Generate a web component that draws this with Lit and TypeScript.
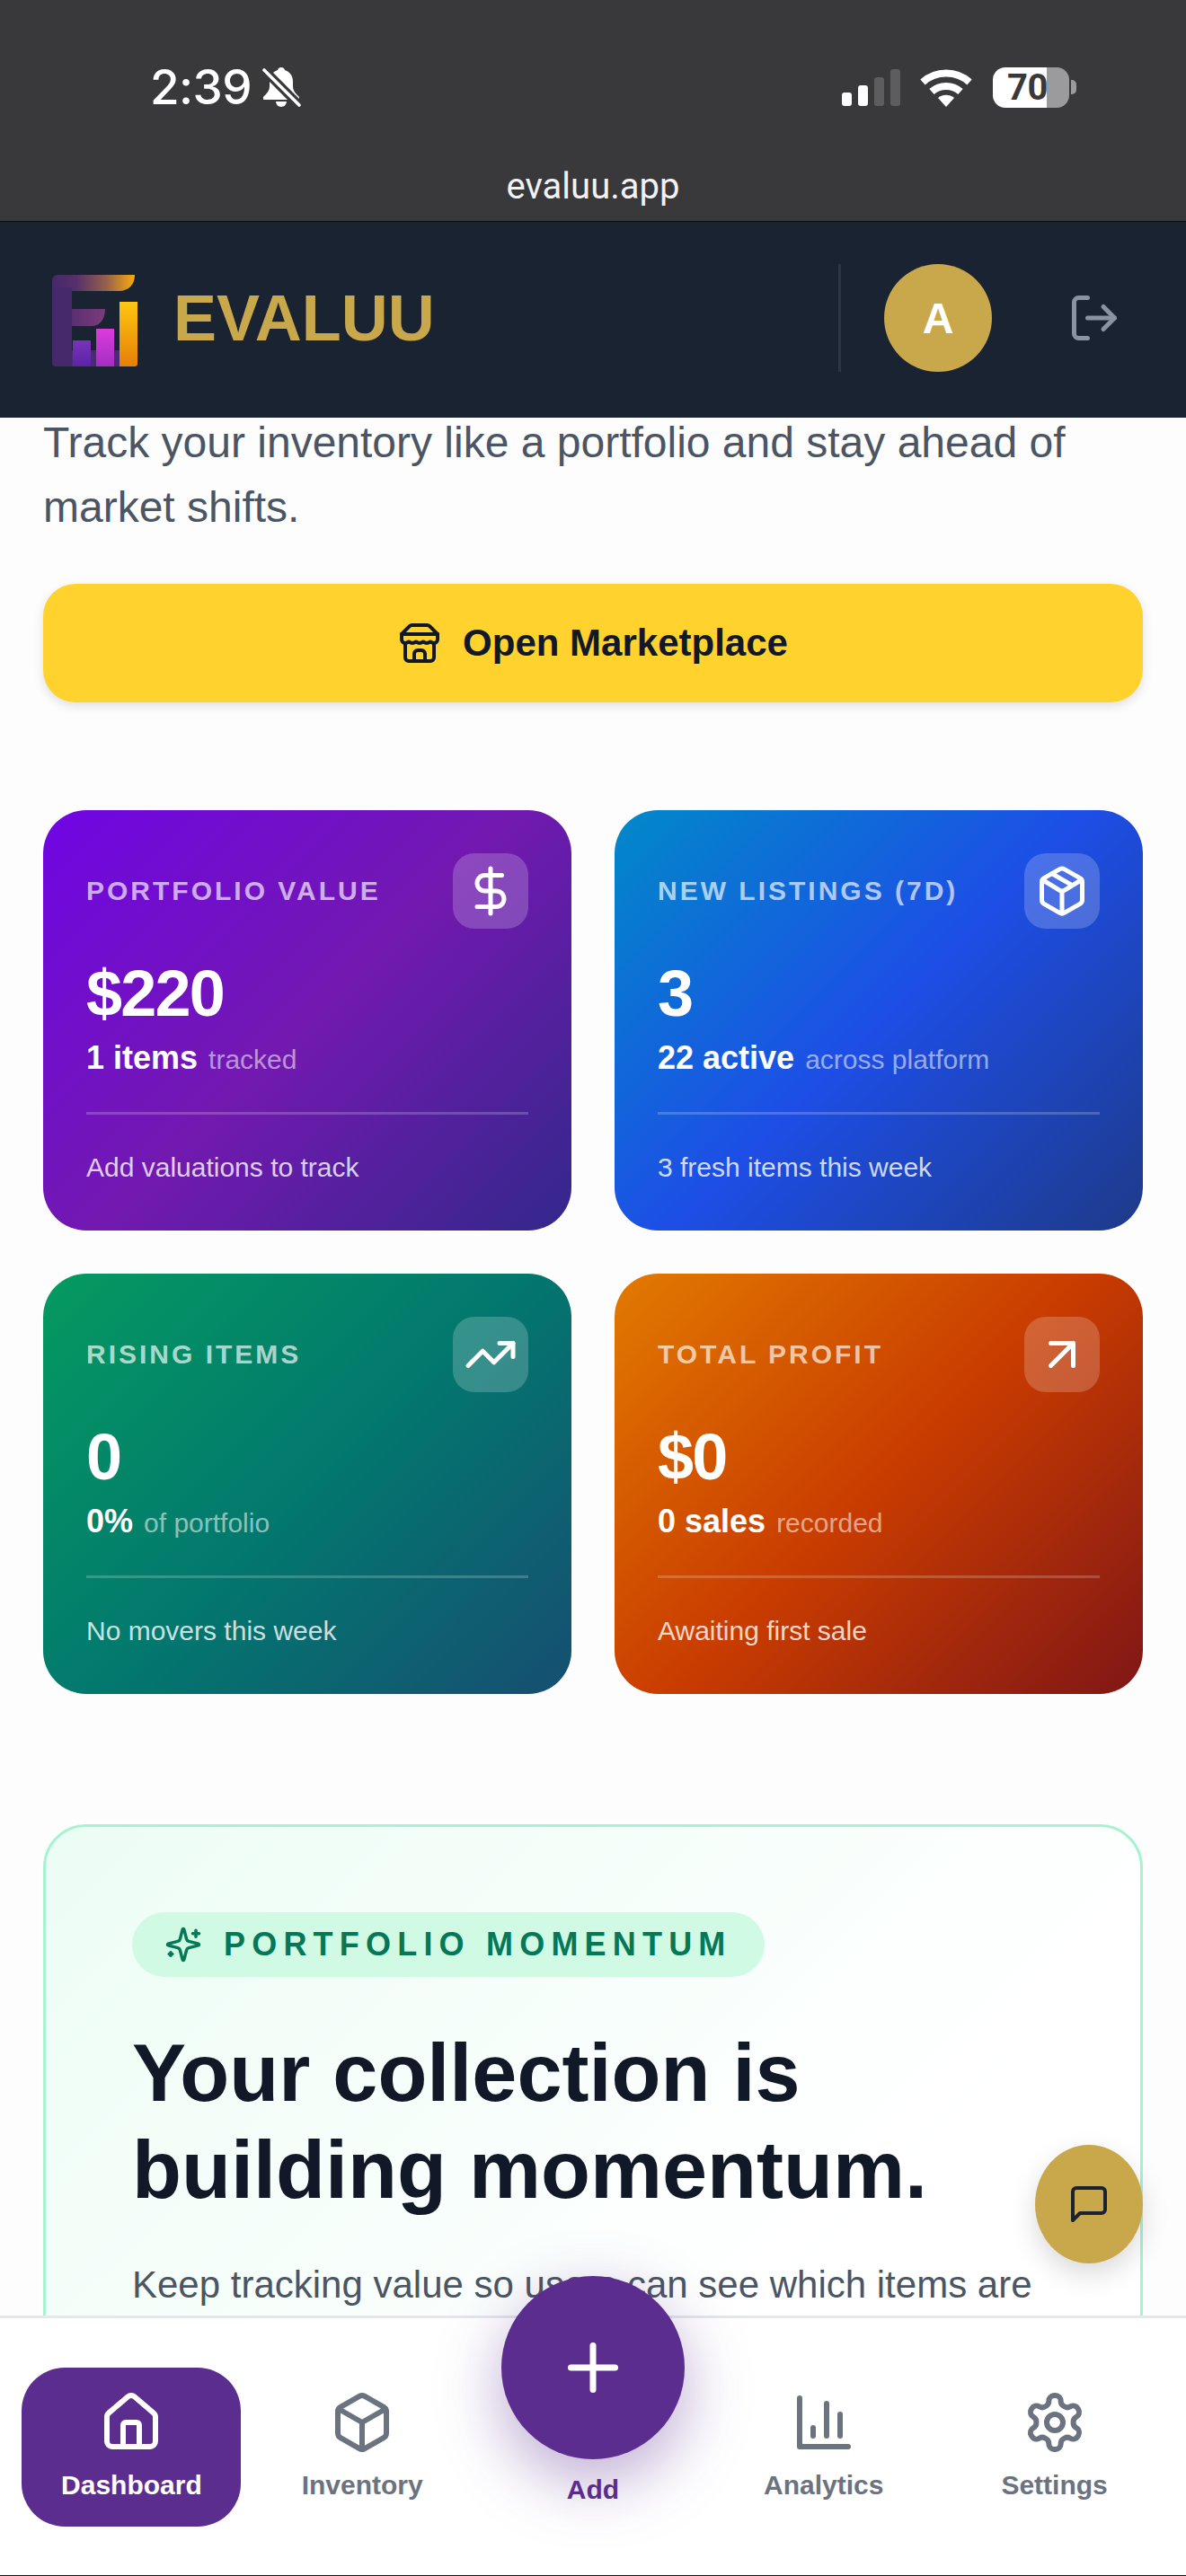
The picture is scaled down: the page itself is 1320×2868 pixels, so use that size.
import { LitElement, html, css, svg } from "lit";
import { customElement } from "lit/decorators.js";

const icon = (size: number, body: unknown, sw = 2) => html`<svg class="ic" width=${size} height=${size} viewBox="0 0 24 24" fill="none" stroke="currentColor" stroke-width=${sw} stroke-linecap="round" stroke-linejoin="round">${body}</svg>`;

const P = {
  logout: svg`<path d="M9 21H5a2 2 0 0 1-2-2V5a2 2 0 0 1 2-2h4"/><polyline points="16 17 21 12 16 7"/><line x1="21" y1="12" x2="9" y2="12"/>`,
  store: svg`<path d="m2 7 4.41-4.41A2 2 0 0 1 7.83 2h8.34a2 2 0 0 1 1.42.59L22 7"/><path d="M4 12v8a2 2 0 0 0 2 2h12a2 2 0 0 0 2-2v-8"/><path d="M15 22v-4a2 2 0 0 0-2-2h-2a2 2 0 0 0-2 2v4"/><path d="M2 7h20"/><path d="M22 7v3a2 2 0 0 1-2 2a2.7 2.7 0 0 1-1.59-.63.7.7 0 0 0-.82 0A2.7 2.7 0 0 1 16 12a2.7 2.7 0 0 1-1.59-.63.7.7 0 0 0-.82 0A2.7 2.7 0 0 1 12 12a2.7 2.7 0 0 1-1.59-.63.7.7 0 0 0-.82 0A2.7 2.7 0 0 1 8 12a2.7 2.7 0 0 1-1.59-.63.7.7 0 0 0-.82 0A2.7 2.7 0 0 1 4 12a2 2 0 0 1-2-2V7"/>`,
  dollar: svg`<line x1="12" y1="2" x2="12" y2="22"/><path d="M17 5H9.5a3.5 3.5 0 0 0 0 7h5a3.5 3.5 0 0 1 0 7H6"/>`,
  pkg: svg`<path d="M11 21.73a2 2 0 0 0 2 0l7-4a2 2 0 0 0 1-1.73V8a2 2 0 0 0-1-1.73l-7-4a2 2 0 0 0-2 0l-7 4A2 2 0 0 0 3 8v8a2 2 0 0 0 1 1.73z"/><path d="M12 22V12"/><path d="m3.3 7 7.703 4.734a2 2 0 0 0 1.994 0L20.7 7"/><path d="m7.5 4.27 9 5.15"/>`,
  trend: svg`<polyline points="22 7 13.5 15.5 8.5 10.5 2 17"/><polyline points="16 7 22 7 22 13"/>`,
  arrow: svg`<path d="M7 7h10v10"/><path d="M7 17 17 7"/>`,
  sparkles: svg`<path d="M9.937 15.5A2 2 0 0 0 8.5 14.063l-6.135-1.582a.5.5 0 0 1 0-.962L8.5 9.936A2 2 0 0 0 9.937 8.5l1.582-6.135a.5.5 0 0 1 .963 0L14.063 8.5A2 2 0 0 0 15.5 9.937l6.135 1.581a.5.5 0 0 1 0 .964L15.5 14.063a2 2 0 0 0-1.437 1.437l-1.582 6.135a.5.5 0 0 1-.963 0z"/><path d="M20 3v4"/><path d="M22 5h-4"/><path d="M4 17v2"/><path d="M5 18H3"/>`,
  house: svg`<path d="M15 21v-8a1 1 0 0 0-1-1h-4a1 1 0 0 0-1 1v8"/><path d="M3 10a2 2 0 0 1 .709-1.528l7-5.999a2 2 0 0 1 2.582 0l7 5.999A2 2 0 0 1 21 10v9a2 2 0 0 1-2 2H5a2 2 0 0 1-2-2z"/>`,
  box: svg`<path d="M21 8a2 2 0 0 0-1-1.73l-7-4a2 2 0 0 0-2 0l-7 4A2 2 0 0 0 3 8v8a2 2 0 0 0 1 1.73l7 4a2 2 0 0 0 2 0l7-4A2 2 0 0 0 21 16Z"/><path d="m3.3 7 8.7 5 8.7-5"/><path d="M12 22V12"/>`,
  chart: svg`<path d="M3 3v18h18"/><path d="M18 17V9"/><path d="M13 17V5"/><path d="M8 17v-3"/>`,
  gear: svg`<path d="M12.22 2h-.44a2 2 0 0 0-2 2v.18a2 2 0 0 1-1 1.73l-.43.25a2 2 0 0 1-2 0l-.15-.08a2 2 0 0 0-2.73.73l-.22.38a2 2 0 0 0 .73 2.73l.15.1a2 2 0 0 1 1 1.72v.51a2 2 0 0 1-1 1.74l-.15.09a2 2 0 0 0-.73 2.73l.22.38a2 2 0 0 0 2.73.73l.15-.08a2 2 0 0 1 2 0l.43.25a2 2 0 0 1 1 1.73V20a2 2 0 0 0 2 2h.44a2 2 0 0 0 2-2v-.18a2 2 0 0 1 1-1.73l.43-.25a2 2 0 0 1 2 0l.15.08a2 2 0 0 0 2.73-.73l.22-.39a2 2 0 0 0-.73-2.73l-.15-.08a2 2 0 0 1-1-1.74v-.5a2 2 0 0 1 1-1.74l.15-.09a2 2 0 0 0 .73-2.73l-.22-.38a2 2 0 0 0-2.73-.73l-.15.08a2 2 0 0 1-2 0l-.43-.25a2 2 0 0 1-1-1.73V4a2 2 0 0 0-2-2z"/><circle cx="12" cy="12" r="3"/>`,
  plus: svg`<path d="M5 12h14"/><path d="M12 5v14"/>`,
  msg: svg`<path d="M21 15a2 2 0 0 1-2 2H7l-4 4V5a2 2 0 0 1 2-2h14a2 2 0 0 1 2 2z"/>`,
};

const cards = [
  { cls: "c1", label: "PORTFOLIO VALUE", ic: P.dollar, value: "$220", strong: "1 items", soft: "tracked", foot: "Add valuations to track" },
  { cls: "c2", label: "NEW LISTINGS (7D)", ic: P.pkg, value: "3", strong: "22 active", soft: "across platform", foot: "3 fresh items this week" },
  { cls: "c3", label: "RISING ITEMS", ic: P.trend, value: "0", strong: "0%", soft: "of portfolio", foot: "No movers this week" },
  { cls: "c4", label: "TOTAL PROFIT", ic: P.arrow, value: "$0", strong: "0 sales", soft: "recorded", foot: "Awaiting first sale" },
];

@customElement("app-root")
export class AppRoot extends LitElement {
  static styles = css`
    :host { display: flex; flex-direction: column; position: relative; width: 1320px; height: 2868px; overflow: hidden; background: #fdfdfe; font-family: "Liberation Sans", Arial, sans-serif; }
    .ic { display: block; flex: none; }

    .status { flex: none; height: 246px; background: #39393b; border-bottom: 1px solid #0c0c0e; color: #fff; display: flex; flex-direction: column; }
    .status-row { display: flex; align-items: center; height: 46px; margin-top: 74px; padding: 0 122px 0 167px; }
    .time { font: 500 53px/46px Inter, sans-serif; letter-spacing: -.6px; }
    .bell { margin-left: 12px; }
    .status-right { margin-left: auto; display: flex; align-items: center; gap: 22px; }
    .signal { display: flex; align-items: flex-end; gap: 7px; height: 41px; }
    .signal i { display: block; width: 11px; border-radius: 3px; background: #fff; }
    .signal i.off { background: #5d5d5f; }
    .battery { display: flex; align-items: center; margin-left: 1px; }
    .batt-body { position: relative; width: 85px; height: 45px; border-radius: 14px; background: linear-gradient(90deg, #fff 0 60px, #9b9b9d 60px); color: #39393b; font: 700 40px/45px Roboto, sans-serif; display: flex; align-items: center; padding-left: 16px; box-sizing: border-box; letter-spacing: -.5px; }
    .batt-nub { width: 6px; height: 16px; margin-left: 2px; border-radius: 0 5px 5px 0; background: #9b9b9d; }
    .url { text-align: center; margin-top: 63px; font: 400 40px/50px Roboto, sans-serif; color: #f2f2f3; }

    .header { flex: none; position: relative; z-index: 2; box-sizing: border-box; height: 218px; background: #1a2332; display: flex; align-items: center; padding: 0 72px 4px 58px; }
    .logo { margin-top: 8px; }
    .brand { margin-left: 39px; font-size: 72px; font-weight: 700; line-height: 80px; color: #c9a84c; }
    .header-right { margin-left: auto; display: flex; align-items: center; }
    .vr { width: 3px; height: 120px; background: rgba(255,255,255,.09); }
    .avatar { margin-left: 48px; width: 120px; height: 120px; border-radius: 50%; background: #c9a84c; color: #fff; display: flex; align-items: center; justify-content: center; font-size: 48px; font-weight: 700; }
    .logout { margin-left: 84px; color: #8a93a3; }

    .main { flex: 1; min-height: 0; overflow: hidden; }
    .scroll { margin-top: -8px; padding: 0 48px; }
    .lead { margin: 0; font-size: 48px; line-height: 72px; color: #4b5563; }
    .market { margin-top: 49px; height: 132px; border-radius: 36px; background: #ffd22e; box-shadow: 0 4px 12px rgba(0,0,0,.12); display: flex; align-items: center; justify-content: center; gap: 24px; color: #111827; font-size: 42px; font-weight: 700; }
    .grid { margin-top: 120px; display: grid; grid-template-columns: 1fr 1fr; gap: 48px; }
    .card { border-radius: 48px; padding: 48px; color: #fff; display: flex; flex-direction: column; }
    .c1 { background: linear-gradient(135deg, #7005e4 0%, #7219b0 50%, #33288a 100%); }
    .c2 { background: linear-gradient(135deg, #0189c9 0%, #1d4ee6 50%, #1e3a8a 100%); }
    .c3 { background: linear-gradient(135deg, #059a60 0%, #02786e 50%, #164e72 100%); }
    .c4 { background: linear-gradient(135deg, #e27a00 0%, #c93c00 50%, #7f1616 100%); }
    .top { display: flex; align-items: center; justify-content: space-between; }
    .label { font-size: 30px; font-weight: 700; letter-spacing: 3px; color: rgba(255,255,255,.68); }
    .ibox { width: 84px; height: 84px; border-radius: 24px; background: rgba(255,255,255,.2); display: flex; align-items: center; justify-content: center; }
    .value { margin-top: 36px; font-size: 72px; line-height: 72px; font-weight: 700; letter-spacing: -1.8px; }
    .sub { margin-top: 12px; height: 48px; display: flex; align-items: baseline; gap: 12px; }
    .sub b { font-size: 36px; line-height: 48px; }
    .sub span { font-size: 30px; line-height: 36px; color: rgba(255,255,255,.55); }
    .rule { margin-top: 36px; height: 3px; background: rgba(255,255,255,.2); }
    .foot { margin-top: 36px; font-size: 30px; line-height: 45px; color: rgba(255,255,255,.8); }

    .momentum { margin-top: 145px; border: 3px solid #a7f3d0; border-radius: 48px; background: linear-gradient(135deg, #ecfdf5 0%, #ffffff 62%); padding: 95px 96px 400px; }
    .pill { display: inline-flex; align-items: center; gap: 24px; height: 72px; padding: 0 36px; border-radius: 36px; background: #d1fae5; color: #047857; font-size: 36px; font-weight: 700; letter-spacing: 7.2px; }
    .momentum h2 { margin: 53px 0 0; font-size: 90px; line-height: 108px; font-weight: 700; color: #111827; }
    .momentum p { margin: 40px 0 0; font-size: 42px; line-height: 68px; color: #4b5563; }

    .nav { flex: none; position: relative; z-index: 2; box-sizing: border-box; height: 290px; background: #fff; border-top: 3px solid #e5e7eb; border-bottom: 1px solid #111; padding: 55px 18px 0; display: grid; grid-template-columns: repeat(5, 1fr); align-items: start; justify-items: center; }
    .item { box-sizing: border-box; width: 244px; height: 177px; border-radius: 48px; padding-top: 25px; display: flex; flex-direction: column; align-items: center; gap: 11px; color: #6b7280; font-size: 30px; font-weight: 700; line-height: 45px; position: relative; }
    .item.active { background: #5b2d8e; color: #fff; }
    .item.add { color: #5b2d8e; padding-top: 113px; }
    .fab { position: absolute; left: 20px; top: -102px; width: 204px; height: 204px; border-radius: 50%; background: #5b2d8e; color: #fff; box-shadow: 0 24px 72px rgba(91,45,142,.4); display: flex; align-items: center; justify-content: center; }
    .chat { position: absolute; z-index: 3; right: 48px; top: 2388px; width: 120px; height: 132px; border-radius: 50%; background: #c9a84c; color: #1a2332; box-shadow: 0 12px 30px rgba(0,0,0,.15); display: flex; align-items: center; justify-content: center; }
  `;

  private logo() {
    return html`<svg class="ic logo" width="96" height="104" viewBox="58 306 96 104">
      <defs>
        <linearGradient id="g1" gradientUnits="userSpaceOnUse" x1="58" y1="0" x2="150" y2="0"><stop offset="0" stop-color="#46296a"/><stop offset=".3" stop-color="#57306a"/><stop offset=".65" stop-color="#94604c"/><stop offset="1" stop-color="#f8ab0d"/></linearGradient>
        <linearGradient id="g2" gradientUnits="userSpaceOnUse" x1="58" y1="0" x2="118" y2="0"><stop offset="0" stop-color="#46296a"/><stop offset="1" stop-color="#7c3b7c"/></linearGradient>
        <linearGradient id="b1" x1="0" y1="0" x2="0" y2="1"><stop offset="0" stop-color="#7a33b8"/><stop offset="1" stop-color="#5a24a6"/></linearGradient>
        <linearGradient id="b2" x1="0" y1="0" x2="0" y2="1"><stop offset="0" stop-color="#dc3bdc"/><stop offset="1" stop-color="#a32fc2"/></linearGradient>
        <linearGradient id="b3" x1="0" y1="0" x2="0" y2="1"><stop offset="0" stop-color="#fdc70f"/><stop offset="1" stop-color="#e67f08"/></linearGradient>
      </defs>
      <path d="M58 312a6 6 0 0 1 6-6h86c0 10-6 18-18 18H58z" fill="url(#g1)"/>
      <path d="M58 344h59c0 10-5 19-15 19H58z" fill="url(#g2)"/>
      <path d="M58 320h22v88H62a4 4 0 0 1-4-4z" fill="#46296a"/>
      <rect x="80" y="390" width="54" height="18" fill="#4a2a70"/>
      <rect x="81" y="379" width="20" height="29" fill="url(#b1)"/>
      <rect x="107" y="366" width="20" height="42" fill="url(#b2)"/>
      <path d="M133 336h20v69a3 3 0 0 1-3 3h-17z" fill="url(#b3)"/>
    </svg>`;
  }

  private bell() {
    return html`<svg class="ic bell" width="44" height="47" viewBox="0 0 44 47">
      <g fill="#fff">
        <path d="M21 1c-2 0-3.5 1.3-4 3C11 6 8 11 8 17v5c0 5-3 8-7 12v3h40v-3c-4-4-7-7-7-12v-5c0-6-3-11-9-13-.5-1.700-2-3-4-3z"/>
        <path d="M15 39a6 6 0 0 0 12 0z"/>
      </g>
      <path d="M1 3 42 44" stroke="#39393b" stroke-width="10"/>
      <path d="M2 4 41 43" stroke="#fff" stroke-width="3.6" stroke-linecap="round"/>
    </svg>`;
  }

  private wifi() {
    return html`<svg class="ic" width="58" height="43" viewBox="0 0 58 43">
      <path d="M3 15.500a39 39 0 0 1 52 0" fill="none" stroke="#fff" stroke-width="8"/>
      <path d="M13 26a24 24 0 0 1 32 0" fill="none" stroke="#fff" stroke-width="8"/>
      <path d="M20 33a14 14 0 0 1 18 0l-9 10z" fill="#fff"/>
    </svg>`;
  }

  render() {
    return html`
      <div class="status">
        <div class="status-row">
          <span class="time">2:39</span>${this.bell()}
          <div class="status-right">
            <div class="signal"><i style="height:15px"></i><i style="height:23px"></i><i class="off" style="height:32px"></i><i class="off" style="height:41px"></i></div>
            ${this.wifi()}
            <div class="battery"><div class="batt-body">70</div><div class="batt-nub"></div></div>
          </div>
        </div>
        <div class="url">evaluu.app</div>
      </div>
      <header class="header">
        ${this.logo()}
        <div class="brand">EVALUU</div>
        <div class="header-right">
          <div class="vr"></div>
          <div class="avatar">A</div>
          <div class="logout">${icon(60, P.logout)}</div>
        </div>
      </header>
      <main class="main">
        <div class="scroll">
          <p class="lead">Track your inventory like a portfolio and stay ahead of market shifts.</p>
          <div class="market">${icon(48, P.store)}<span>Open Marketplace</span></div>
          <div class="grid">
            ${cards.map((c) => html`
              <div class="card ${c.cls}">
                <div class="top"><div class="label">${c.label}</div><div class="ibox">${icon(60, c.ic)}</div></div>
                <div class="value">${c.value}</div>
                <div class="sub"><b>${c.strong}</b><span>${c.soft}</span></div>
                <div class="rule"></div>
                <div class="foot">${c.foot}</div>
              </div>`)}
          </div>
          <section class="momentum">
            <div class="pill">${icon(42, P.sparkles)}<span>PORTFOLIO MOMENTUM</span></div>
            <h2>Your collection is building momentum.</h2>
            <p>Keep tracking value so users can see which items are</p>
          </section>
        </div>
      </main>
      <nav class="nav">
        <div class="item active">${icon(72, P.house)}<span>Dashboard</span></div>
        <div class="item">${icon(72, P.box)}<span>Inventory</span></div>
        <div class="item add"><div class="fab">${icon(84, P.plus)}</div><span>Add</span></div>
        <div class="item">${icon(72, P.chart)}<span>Analytics</span></div>
        <div class="item">${icon(72, P.gear)}<span>Settings</span></div>
      </nav>
      <div class="chat">${icon(48, P.msg)}</div>
    `;
  }
}
